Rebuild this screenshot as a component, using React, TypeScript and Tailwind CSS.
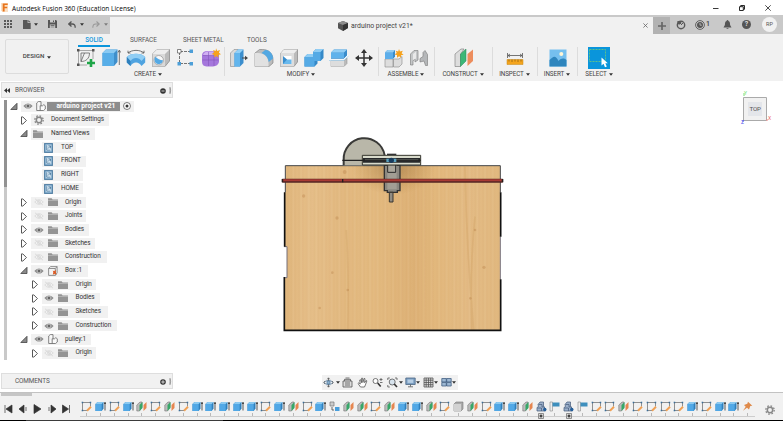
import React from "react";

type P = { className?: string };

const Caret = ({ className = "" }: P) => (
  <svg className={`shrink-0 ${className}`} width="4" height="3" viewBox="0 0 4 3"><path d="M0 .2h4L2 2.8z" fill="#333" /></svg>
);

/* ---------- title and document bar ---------- */

function TitleBar() {
  return (
    <div className="flex h-[15px] shrink-0 items-center bg-white pr-[12px]">
      <svg width="9" height="11" viewBox="0 0 9 11" className="ml-px">
        <path d="M0 1h7v9H1.5L0 8.5z" fill="#fbe0c4" />
        <path d="M1.7 1.5h5V3H3.6v1.7h2.6v1.5H3.6V9.5H1.7z" fill="#e8741c" />
      </svg>
      <span className="ml-[2px] mt-[2px] w-[126px] whitespace-nowrap font-['Open_Sans'] text-[6.5px] tracking-[0.02px] text-black">Autodesk Fusion 360 (Education License)</span>
      <div className="ml-auto flex items-center gap-[20px]">
        <svg width="6" height="6" viewBox="0 0 6 6"><path d="M0 3.5h5.5" stroke="#222" strokeWidth=".9" /></svg>
        <svg width="6" height="6" viewBox="0 0 6 6" fill="none" stroke="#111" strokeWidth=".9"><path d="M.5 1.7h3.8v3.8H.5z" /><path d="M1.700 1.700V.5h3.800v3.800H4.300" /></svg>
        <svg width="6" height="6" viewBox="0 0 6 6"><path d="M.3.3l5.4 5.4M5.7.3L.3 5.7" stroke="#222" strokeWidth=".8" /></svg>
      </div>
    </div>
  );
}

function DocumentBar() {
  return (
    <div className="flex h-[19px] shrink-0 bg-[#c9c9c9] pt-[2px]">
      <div className="flex w-[110px] shrink-0 items-center pb-[3px] pl-[4px]">
        <svg width="8" height="8" viewBox="0 0 8 8" fill="#595959">
          {[0, 3, 6].map((y) => [0, 3, 6].map((x) => <rect key={`${x}${y}`} x={x} y={y} width="2" height="2" />))}
        </svg>
        <svg className="ml-[11px]" width="8" height="9" viewBox="0 0 8 9"><path d="M0 0h4.600v3H7.700v6H0z" fill="#595959" /><path d="M5.300 0l2.400 2.300H5.300z" fill="#595959" /></svg>
        <Caret className="ml-[3px]" />
        <svg className="ml-[10px]" width="9" height="8" viewBox="0 0 9 8"><path d="M0 0h8l1 1v7H0z" fill="#555" /><path d="M2 0h5v2.500H2zM1.800 4.400h5.400V8H1.800z" fill="#c9c9c9" /><path d="M5 .4h1v1.500H5zM2.600 5.300h3.800v.7H2.600zM2.600 6.700h3.800v.6H2.600z" fill="#555" /></svg>
        <svg className="ml-[11px]" width="8" height="7" viewBox="0 0 8 7"><path d="M3.500.5L.8 3l2.700 2.500M.8 3h3.500q3 0 2.900 3.700" fill="none" stroke="#555" strokeWidth="1.300" /></svg>
        <Caret className="ml-[4px]" />
        <svg className="ml-[8px]" width="8" height="7" viewBox="0 0 8 7"><path d="M4.500.5L7.200 3 4.500 5.500M7.200 3H3.700Q.8 3 .8 6.700" fill="none" stroke="#999" strokeWidth="1.100" /></svg>
        <Caret className="ml-[4px] opacity-50" />
      </div>
      <div className="flex w-[543px] items-center bg-[#f1f1f1] pr-[5px]">
        <svg className="ml-[228px]" width="10" height="10" viewBox="0 0 10 10"><path d="M0 2l5-2 5 2v5L5 10 0 7.300z" fill="#545454" /><path d="M0 2l5-2 5 2-5 1.900z" fill="#8e8e8e" /><path d="M5 3.900L10 2v5l-5 3z" fill="#353535" /></svg>
        <span className="ml-[3px] mt-[1px] whitespace-nowrap font-['Roboto'] text-[6.9px] text-[#444]">arduino project v21*</span>
        <svg className="ml-auto" width="5" height="5" viewBox="0 0 5 5"><path d="M.4.4l4.200 4.200M4.600.4L.4 4.600" stroke="#666" strokeWidth=".8" /></svg>
      </div>
      <div className="flex w-[17px] items-center justify-center bg-[#b2b2b2]">
        <svg width="8" height="8" viewBox="0 0 8 8"><path d="M4 0v8M0 4h8" stroke="#666" strokeWidth="1.700" /></svg>
      </div>
      <div className="flex flex-1 items-center pb-[2px] pl-[6px]">
        <svg width="10" height="10" viewBox="0 0 10 10"><circle cx="5" cy="5" r="3.700" fill="none" stroke="#595959" strokeWidth="1.400" /><path d="M1.400 1h3.800v3H3.800L3 5.300 2.400 4h-1z" fill="#595959" /><path d="M5 5l2-2" stroke="#595959" /></svg>
        <svg className="ml-[9px]" width="10" height="10" viewBox="0 0 10 10"><circle cx="5" cy="5" r="4.400" fill="none" stroke="#555" strokeWidth=".9" /><circle cx="5" cy="5" r="3" fill="#555" /><path d="M5 3v2.200h1.800" fill="none" stroke="#c9c9c9" strokeWidth=".8" /></svg>
        <span className="ml-[1px] w-[5px] font-['Roboto'] text-[7px] font-medium text-[#444]">1</span>
        <svg className="ml-[12px]" width="9" height="10" viewBox="0 0 9 10" fill="#555"><path d="M4.500 0c.6 0 .9.4.9.9C7 1.500 7 3 7.100 5L8.500 7.600H.5L1.900 5C2 3 2 1.500 3.600.9c0-.5.3-.9.9-.9zM3.300 8.300h2.400c0 1-2.400 1-2.400 0z" /></svg>
        <span className="ml-[10px] flex h-[9px] w-[9px] items-center justify-center rounded-full bg-[#555] font-['Roboto'] text-[7px] font-bold leading-none text-[#ddd]">?</span>
        <span className="ml-[11px] flex h-[15px] w-[15px] items-center justify-center rounded-full bg-[#f1f1f1] font-['Roboto'] text-[5.5px] text-[#555]">RP</span>
      </div>
    </div>
  );
}

/* ---------- ribbon icons, all drawn on a 20 unit grid ---------- */

const Ico = ({ children, className = "" }: { children: React.ReactNode; className?: string }) => (
  <svg className={`shrink-0 ${className}`} width="20" height="20" viewBox="0 0 20 20" fill="none">{children}</svg>
);

const icons = {
  sketch: (
    <Ico><path d="M2 2.500h15M2.500 2v15M17 2v9M2 17h9" stroke="#777" strokeWidth=".6" /><path d="M5 5v8.500c5 0 8.500-3 8.500-8.500M5 5h8.500M5 13.500L8.500 5" stroke="#666" strokeWidth=".8" /><path d="M1 1h2.500v2.500H1zM16 1h2.500v2.500H16zM1 15.500h2.500V18H1z" fill="#555" /><path d="M15 11v8M11 15h8" stroke="#1fa548" strokeWidth="2.600" /></Ico>
  ),
  extrude: (
    <Ico><path d="M1.500 5l3.500-3.500h11.500v12.500l-3.500 4H1.500z" fill="#3f8fcb" /><path d="M1.500 5l3.500-3.500h11.500l-3.500 3.500z" fill="#8bcaf2" /><path d="M1.500 5H13v13H1.500z" fill="#58aee8" /><path d="M18.300 17V3M17 4.500L18.300 2l1.400 2.500" stroke="#555" strokeWidth=".8" /></Ico>
  ),
  revolve: (
    <Ico><path d="M.8 9C4 4.500 16 4.500 19.200 9v5.500L15.500 18q-2-3.500-5.500-3.500T4.500 18L.8 14.500z" fill="#4fa3e0" /><path d="M.8 9C4 4.500 16 4.500 19.200 9l-3.700 4q-2-3-5.500-3t-5.500 3z" fill="#91cef4" /><path d="M4.500 13v5L.8 14.500V9z" fill="#2f80bd" /><path d="M2 5C6 1.500 14 1.500 18 5M2 2.700V5h2.500M18 2.700V5h-2.500" stroke="#555" strokeWidth=".8" /></Ico>
  ),
  hole: (
    <Ico><path d="M1.500 6l4.500-4.500h12.500v11.500L14 18.500H1.500z" fill="#bbb" stroke="#777" strokeWidth=".6" /><path d="M1.500 6L6 1.500h12.500L14 6z" fill="#eee" /><path d="M1.500 6H14v12.500H1.500z" fill="#d9d9d9" /><circle cx="7.700" cy="12.200" r="4.700" fill="#f8f8f8" stroke="#888" strokeWidth=".6" /><path d="M4.500 8.800c2.500 2 4 3.500 7.500 3.500-.5 4-5 5-7.500 2.500-1.500-2-1.300-4.500 0-6z" fill="#54a9e4" /></Ico>
  ),
  pattern: (
    <Ico><path d="M4 3.500h12M3.500 4v12M4 15.500h12" stroke="#555" strokeWidth=".8" strokeDasharray="3 1" /><path d="M1.500 1.500H5V5H1.500z" fill="#fff" stroke="#555" strokeWidth=".7" /><path d="M13.500 1.500H17V5h-3.500zM1.500 14H5v3.500H1.500zM13.500 14H17v3.500h-3.500z" fill="#4d9fd8" /></Ico>
  ),
  form: (
    <Ico><path d="M1 7Q1.500 3 6.500 3h7.500q4 0 4 4v7q-1 4-6 4.500H5.500Q1 18 1 14z" fill="#a577dc" /><path d="M2 7q1-3.500 5-3.500h7q3 0 3.500 3L14 8z" fill="#d0b0f2" /><path d="M1.500 12h16M7.500 4v14M13 4v14M2 7.500h15" stroke="#8355ba" strokeWidth=".6" /><path d="M15 .3l1.200 2.600 2.800-.9-1.100 2.700 2.100 1.600-2.700.7.200 2.700-2.100-1.700-2.200 1.600.1-2.700-2.600-.8 2.400-1.500-1-2.600 2.600.9z" fill="#f6a21d" /></Ico>
  ),
  press: (
    <Ico><path d="M1.500 5L5 1.500h4V15l-3.500 3.500h-4z" fill="#d9d9d9" stroke="#888" strokeWidth=".6" /><path d="M5.500 5L9 1.500h5.500V15L11 18.500H5.500z" fill="#3b8ecd" /><path d="M5.500 5H11v13.500H5.500z" fill="#62b5ed" /><path d="M5.500 5L9 1.500h5.500L11 5z" fill="#92d0f7" /><path d="M13 10h4" stroke="#444" /><path d="M16 7.800l3 2.200-3 2.200z" fill="#444" /></Ico>
  ),
  fillet: (
    <Ico><path d="M1 5l4.500-3.500h3c6 0 10.500 4 10.500 10V15L15 18.500H1z" fill="#bcbcbc" stroke="#777" strokeWidth=".6" /><path d="M1 5h3c6 0 10.500 4 10.500 10v3.500H1z" fill="#e1e1e1" /><path d="M7.500 5l4-3.200c4.500 1 7.500 4 7.500 8.700L14.700 14c-.4-4-3-7.500-7.200-9z" fill="#53a8e2" /></Ico>
  ),
  shell: (
    <Ico><path d="M1.500 5.500L5 1.500h13.500V14L15 18.500H1.500z" fill="#bbb" stroke="#777" strokeWidth=".6" /><path d="M1.500 5.500H15v13H1.500z" fill="#ddd" /><path d="M1.500 5.500L5 1.500h13.500l-3.500 4z" fill="#eee" /><path d="M4 8h8.500v8H4z" fill="#fff" /><path d="M4 8l4 3.500v4.500H4z" fill="#3b8ecd" /><path d="M8 11.500h4.500V16H4z" fill="#69b9ed" /></Ico>
  ),
  combine: (
    <Ico><path d="M.5 9l3-3H9V4l3-3h7.500v9l-3 3H13.500v2.500l-3 3H.5z" fill="#3589c8" /><path d="M.5 9H9V4h7.500v9h-6v5.500H.5z" fill="#55aae5" /><path d="M.5 9l3-3H9v3zM9 4l3-3h7.500l-3 3z" fill="#90cdf4" /></Ico>
  ),
  split: (
    <Ico><path d="M2 4.500L5 1.500h13V8l-3 3H2z" fill="#398ccc" /><path d="M2 4.500h13V10H2z" fill="#60b2eb" /><path d="M2 4.500l3-3h13l-3 3z" fill="#93cef4" /><path d="M2 13h13l3-3v5.500L15 18.500H2z" fill="#bbb" stroke="#888" strokeWidth=".5" /><path d="M2 13h13v5.500H2z" fill="#ddd" /><path d="M0 11.500h15L19.500 7" stroke="#fff" strokeWidth="1.300" /><path d="M0 12.300h15L19.500 8" stroke="#5aace0" strokeWidth=".5" /></Ico>
  ),
  move: (
    <Ico><path d="M10 3v14M3 10h14" stroke="#333" strokeWidth="1.500" /><path d="M10 1l3 4H7zM10 19l3-4H7zM1 10l4-3v6zM19 10l-4-3v6z" fill="#333" /></Ico>
  ),
  component: (
    <Ico><path d="M1 11h8v8H1zM9.500 11H15l3-2.500V16l-3 3H9.500z" fill="#ddd" stroke="#888" strokeWidth=".6" /><path d="M1 4.500L3.500 2H11v6.500L9 11H1z" fill="#378bcb" /><path d="M1 4.500h8V11H1z" fill="#5badea" /><path d="M1 4.500L3.500 2H11L9 4.500z" fill="#91ccf3" /><path d="M15 1l1 2.500 2.800-.7-1.200 2.400 2 1.500-2.600.5.200 2.500-2.100-1.500-2.100 1.600v-2.700l-2.600-.5 2.300-1.500-1-2.400 2.500.8z" fill="#f6a21d" /></Ico>
  ),
  joint: (
    <Ico><path d="M1.500 6L5 2.500h4V12l-3 2v-2.500q-2 0-2 2V17H1.500z" fill="#c5c7c8" stroke="#777" strokeWidth=".6" /><path d="M18.500 6.500L16 2.500 14 4.500v4l-3 2V14l4-1 1.500 4.500h2z" fill="#b5b7b9" stroke="#777" strokeWidth=".6" /><path d="M4 6l3-2.500v7L4 12z" fill="#e9e9e9" /></Ico>
  ),
  plane: (
    <Ico><path d="M1 6l6-5h3L6.500 6.500v12H1z" fill="#ddd" stroke="#777" strokeWidth=".6" /><path d="M6.500 6L12 1v12l-5.500 5.500z" fill="#3cb777" stroke="#258b54" strokeWidth=".5" /><path d="M13.500 6L19 1.500V13l-5.500 5z" fill="#ed8d5d" /></Ico>
  ),
  measure: (
    <Ico><path d="M2 11.500h16v5H2z" fill="#f4a51e" stroke="#c58717" strokeWidth=".5" /><path d="M4 11.500v2M7 11.500v2.500M10 11.500v2M13 11.500v2.500M16 11.500v2" stroke="#855910" strokeWidth=".7" /><path d="M2.500 5v5M17.500 5v5M3 7.500h14M5 6L3 7.500 5 9M15 6l2 1.500L15 9" stroke="#555" strokeWidth=".8" /></Ico>
  ),
  image: (
    <Ico><path d="M1.500 1.500h17v17h-17z" fill="#75bfee" /><path d="M1.500 12c4-4 6-5 9 1 3-3 5-3 8-1v6.500h-17z" fill="#2e85bd" /><circle cx="13.300" cy="6" r="2" fill="#fff5d5" /></Ico>
  ),
  select: (
    <svg className="mr-[2px] shrink-0" width="22" height="22" viewBox="0 0 22 22" fill="none"><path d="M0 0h22v22H0z" fill="#0a95db" /><path d="M1.500 2.500h16v12h-16z" stroke="#72cb76" strokeWidth=".8" strokeDasharray="2 1" /><path d="M13.500 10.500v8l2-1.700 1.500 3.400 1.800-.8-1.500-3.200h2.500z" fill="#fff" /></svg>
  ),
};

function Group({ label, items, className }: { label: string; items: React.ReactNode[]; className: string }) {
  return (
    <div className={`flex shrink-0 flex-col items-center ${className}`}>
      <div className="flex h-[22px] items-center justify-center gap-[4.900px]">
        {items.map((it, i) => <React.Fragment key={i}>{it}</React.Fragment>)}
      </div>
      <div className="mt-[1px] flex h-[9px] items-center gap-[2px] whitespace-nowrap pr-[1px] font-['Roboto'] text-[6.3px] tracking-[-0.1px] text-[#444]">
        {label}<Caret />
      </div>
    </div>
  );
}

const Rule = () => <div className="h-[29px] w-px shrink-0 bg-[#dcdcdc]" />;

function Ribbon() {
  return (
    <div className="flex h-[47px] shrink-0 bg-[#f1f1f1]">
      <div className="ml-[5px] mt-[5px] flex h-[35px] w-[64px] items-center justify-center gap-[3px] rounded-[2px] border border-[#dcdcdc] pt-[1px] font-['Roboto'] text-[6.2px] font-medium text-[#444]">
        DESIGN<Caret />
      </div>
      <div className="ml-[4px] flex flex-col">
        <div className="flex h-[13px] font-['Roboto'] text-[6.400px] leading-[12px] text-[#555]">
          <span className="ml-[5px] w-[32px] border-b-2 border-[#0a95db] text-center font-medium text-[#0a95db]">SOLID</span>
          <span className="ml-[20px] w-[53px] whitespace-nowrap">SURFACE</span>
          <span className="w-[64px] whitespace-nowrap tracking-[-0.08px]">SHEET METAL</span>
          <span>TOOLS</span>
        </div>
        <div className="flex">
          <Group className="w-[151px]" label="CREATE" items={[icons.sketch, icons.extrude, icons.revolve, icons.hole, icons.pattern, icons.form]} />
          <Rule />
          <Group className="w-[153px]" label="MODIFY" items={[icons.press, icons.fillet, icons.shell, icons.combine, icons.split, icons.move]} />
          <Rule />
          <Group className="w-[55px]" label="ASSEMBLE" items={[icons.component, icons.joint]} />
          <Rule />
          <Group className="w-[57px]" label="CONSTRUCT" items={[icons.plane]} />
          <Rule />
          <Group className="w-[44px]" label="INSPECT" items={[icons.measure]} />
          <Rule />
          <Group className="w-[39px]" label="INSERT" items={[icons.image]} />
          <Rule />
          <Group className="w-[43px]" label="SELECT" items={[icons.select]} />
        </div>
      </div>
    </div>
  );
}

/* ---------- browser tree ---------- */

const Eye = ({ off }: { off?: boolean }) => (
  <svg width="10" height="8" viewBox="0 0 10 8" className="shrink-0">
    {off ? (
      <g fill="none" stroke="#d5d5d5" strokeWidth=".8"><path d="M.8 4C3 1 7 1 9.200 4 7 7 3 7 .8 4z" /><circle cx="5" cy="4" r="1.400" /><path d="M1 .8l8 6.400" /></g>
    ) : (
      <g><path d="M.4 4C3 .6 7 .6 9.600 4 7 7.400 3 7.400.4 4z" fill="#8c8c8c" /><circle cx="5" cy="4" r="1.900" fill="#666" stroke="#e0e0e0" strokeWidth=".7" /></g>
    )}
  </svg>
);

const Folder = () => (
  <svg width="10" height="8" viewBox="0 0 10 8" className="shrink-0"><path d="M0 .3h3.600l1 1.200H10V8H0z" fill="#949494" /><path d="M0 2.500h10" stroke="#c5c5c5" strokeWidth=".6" /></svg>
);

const Gear = ({ className = "" }: P) => (
  <svg width="10" height="10" viewBox="0 0 10 10" className={`shrink-0 ${className}`}><circle cx="5" cy="5" r="2.700" fill="none" stroke="#888" strokeWidth="1.500" /><circle cx="5" cy="5" r="4.200" fill="none" stroke="#888" strokeWidth="1.300" strokeDasharray="1.650 1.650" /></svg>
);

const ViewIcon = () => (
  <svg width="9" height="10" viewBox="0 0 9 10" className="shrink-0"><path d="M.4.4h8.200v9.200H.4z" fill="#6f9fc3" stroke="#3d6f95" strokeWidth=".8" /><path d="M1.700 1.700h5.600v6.500H1.700z" fill="#d5e6f2" /><path d="M2.700 2.200v5h3.800M4 5.500l2.500-2.500M4.300 2.800h2.200v2.500" fill="none" stroke="#3d6f95" strokeWidth=".7" /></svg>
);

const BoxIcon = () => (
  <svg width="10" height="10" viewBox="0 0 10 10" className="shrink-0"><path d="M.6 2.500L2.500.6h6.600v6.200L7.500 9.400H.6zM.6 2.500h6.700V9M7.300 2.500L9 .7" fill="#f4f4f4" stroke="#777" strokeWidth=".8" /><path d="M4.800 4.500l1.200.8 2-1.300-.3 2 .8 2.500-1.700-.7-2 1 .5-2.200z" fill="#dd5a22" /></svg>
);

const PartIcon = () => (
  <svg width="10" height="10" viewBox="0 0 10 10" className="shrink-0"><path d="M.7 2L2.200.6H5v4.200M.7 2v7.500h6.800L9.300 8V4.800L7.800 3.700 6.500 4.800H4.200v4.700" fill="#fafafa" stroke="#666" strokeWidth=".8" /></svg>
);

const Arrow = ({ open }: { open?: boolean }) => (
  <svg width="8" height="9" viewBox="0 0 8 9" className="shrink-0">
    {open ? <path d="M7 1.300v6.200H.8z" fill="#8a8a8a" stroke="#444" strokeWidth=".8" /> : <path d="M1.500.9h1.300l3.600 3.600-3.600 3.600H1.500z" fill="#fff" stroke="#444" strokeWidth=".9" />}
  </svg>
);

type Item = { t: string; lvl: 0 | 1 | 2; open?: boolean; kind: "root" | "gear" | "views" | "view" | "folder" | "box" | "part"; off?: boolean; w: string };

const tree: Item[] = [
  { t: "arduino project v21", lvl: 0, open: true, kind: "root", w: "w-[113px]" },
  { t: "Document Settings", lvl: 1, kind: "gear", w: "w-[78px]" },
  { t: "Named Views", lvl: 1, open: true, kind: "views", w: "w-[64px]" },
  { t: "TOP", lvl: 2, kind: "view", w: "w-[34px]" },
  { t: "FRONT", lvl: 2, kind: "view", w: "w-[44px]" },
  { t: "RIGHT", lvl: 2, kind: "view", w: "w-[41px]" },
  { t: "HOME", lvl: 2, kind: "view", w: "w-[41px]" },
  { t: "Origin", lvl: 1, kind: "folder", off: true, w: "w-[55px]" },
  { t: "Joints", lvl: 1, kind: "folder", off: true, w: "w-[55px]" },
  { t: "Bodies", lvl: 1, kind: "folder", w: "w-[58px]" },
  { t: "Sketches", lvl: 1, kind: "folder", off: true, w: "w-[64px]" },
  { t: "Construction", lvl: 1, kind: "folder", off: true, w: "w-[76px]" },
  { t: "Box :1", lvl: 1, open: true, kind: "box", w: "w-[57px]" },
  { t: "Origin", lvl: 2, kind: "folder", off: true, w: "w-[54px]" },
  { t: "Bodies", lvl: 2, kind: "folder", w: "w-[58px]" },
  { t: "Sketches", lvl: 2, kind: "folder", off: true, w: "w-[66px]" },
  { t: "Construction", lvl: 2, kind: "folder", w: "w-[75px]" },
  { t: "pulley:1", lvl: 1, open: true, kind: "part", w: "w-[60px]" },
  { t: "Origin", lvl: 2, kind: "folder", off: true, w: "w-[54px]" },
];

const indent = ["pl-[3px]", "pl-[13px]", "pl-[23.500px]"];

function Row({ it }: { it: Item }) {
  return (
    <div className={`flex h-[13.780px] items-center ${indent[it.lvl]}`}>
      {it.kind === "view" ? <span className="w-[8px]" /> : <Arrow open={it.open} />}
      <div className={`ml-[3px] flex h-[11.500px] items-center whitespace-nowrap bg-[#f1f1f1] pl-[1.500px] font-['Roboto'] text-[6.400px] tracking-[-0.08px] text-[#333] ${it.w}`}>
        {it.kind === "root" && (
          <>
            <Eye />
            <span className="ml-[3px]"><PartIcon /></span>
            <span className="ml-[1px] flex h-[9px] w-[73px] items-center justify-end bg-[#8d8d8d] pr-[4px] text-[6.700px] font-bold tracking-[0.05px] text-white">{it.t}</span>
            <svg className="ml-[3px]" width="8" height="8" viewBox="0 0 8 8"><circle cx="4" cy="4" r="3.500" fill="#fff" stroke="#444" strokeWidth=".7" /><circle cx="4" cy="4" r="1.500" fill="#333" /></svg>
          </>
        )}
        {it.kind === "gear" && <><Gear className="ml-[1px]" /><span className="ml-[7.500px]">{it.t}</span></>}
        {it.kind === "views" && <><Folder /><span className="ml-[8.500px]">{it.t}</span></>}
        {it.kind === "view" && <><span className="ml-[0.500px]"><ViewIcon /></span><span className="ml-[8.500px]">{it.t}</span></>}
        {(it.kind === "folder" || it.kind === "box" || it.kind === "part") && (
          <>
            <span className="ml-[1px]"><Eye off={it.off} /></span>
            <span className="ml-[4px]">{it.kind === "folder" ? <Folder /> : it.kind === "box" ? <BoxIcon /> : <PartIcon />}</span>
            <span className="ml-[7.500px]">{it.t}</span>
          </>
        )}
      </div>
    </div>
  );
}

function PanelHead({ title, plus }: { title: string; plus?: boolean }) {
  return (
    <div className="ml-px flex h-[16px] w-[172px] shrink-0 items-center border border-[#dedede] bg-[#f1f1f1] pt-[1px] font-['Roboto'] text-[6.400px] text-[#555]">
      <span className="flex w-[13px] pl-[2px]">{!plus && <svg width="6" height="5" viewBox="0 0 6 5"><path d="M3 0v5L0 2.500zM6 0v5L3 2.500z" fill="#333" /></svg>}</span>
      <span className={plus ? "tracking-[-0.1px]" : ""}>{title}</span>
      <svg className="ml-auto" width="6" height="6" viewBox="0 0 6 6"><circle cx="3" cy="3" r="2.800" fill="#333" /><path d={plus ? "M1.200 3h3.600M3 1.200v3.600" : "M1.500 3h3"} stroke="#f1f1f1" strokeWidth=".8" /></svg>
      <svg className="ml-[3px]" width="3" height="7" viewBox="0 0 3 7"><path d="M1 .3v6.400q1.200-3.200 0-6.400z" stroke="#777" strokeWidth=".6" fill="none" /></svg>
    </div>
  );
}

/* ---------- canvas ---------- */

function Model() {
  return (
    <svg className="absolute left-[275px] top-[49px]" width="240" height="210" viewBox="0 0 720 630">
      <defs>
        <linearGradient id="wood" x1="0" x2="1">
          <stop offset="0" stopColor="#e0b67c" /><stop offset=".12" stopColor="#e5be88" /><stop offset=".27" stopColor="#e2b980" /><stop offset=".42" stopColor="#e3ba80" /><stop offset=".6" stopColor="#ddb176" /><stop offset=".7" stopColor="#e2b87d" /><stop offset=".85" stopColor="#e3bb84" /><stop offset="1" stopColor="#e1b87f" />
        </linearGradient>
        <radialGradient id="shade"><stop offset="0" stopColor="#7a5527" stopOpacity=".42" /><stop offset="1" stopColor="#9b6e2d" stopOpacity="0" /></radialGradient>
        <pattern id="grain" width="23" height="630" patternUnits="userSpaceOnUse"><path d="M3 0v630M15 0v630" stroke="#bd8744" strokeWidth="2" opacity=".1" /><path d="M9 0v630" stroke="#fff0cb" strokeWidth="2" opacity=".14" /></pattern>
        <clipPath id="board"><path d="M32 107H676V600H28V443H36V350H28V187H32z" /></clipPath>
      </defs>
      <g clipPath="url(#board)">
        <path d="M28 107h650v494H28z" fill="url(#wood)" />
        <path d="M28 107h650v494H28z" fill="url(#grain)" />
        <ellipse cx="355" cy="115" rx="125" ry="80" fill="url(#shade)" />
        <path d="M214 300q8 140 4 300M570 110q4 240 26 490M600 260q-16 150-10 340" fill="none" stroke="#ba803c" strokeWidth="5" opacity=".16" />
        <g fill="#a4662c" opacity=".25"><circle cx="86" cy="198" r="5" /><circle cx="186" cy="264" r="5" /><circle cx="209" cy="126" r="6" /><circle cx="627" cy="412" r="5" /><circle cx="218" cy="480" r="4" /><circle cx="172" cy="428" r="4" /><circle cx="600" cy="300" r="4" /><circle cx="134" cy="534" r="4" /><circle cx="586" cy="505" r="4" /></g>
      </g>
      <path d="M31 187V107H676V187" fill="none" stroke="#444" strokeWidth="3" />
      <path d="M28 350h8v93h-8M676 320v128" fill="none" stroke="#77717b" strokeWidth="3" />
      <path d="M29 187v163M28 441v160h649V448M677 187v133" fill="none" stroke="#111" strokeWidth="5" />
      <path d="M206 106V88a62 62 0 0 1 123-12v30z" fill="#b9b7a9" />
      <path d="M206 106V90a62 62 0 0 1 123-14" fill="none" stroke="#3a3a38" strokeWidth="6" />
      <path d="M328 106h47v76h-8v5h-30v-5h-9z" fill="#8b8880" stroke="#333" strokeWidth="4" />
      <path d="M337 106h28v72h-28z" fill="#a29e94" /><path d="M338 104h24v23h-24z" fill="#aaa69b" stroke="#292929" strokeWidth="3" />
      <path d="M343 187h11v29h-11z" fill="#918c82" stroke="#39352e" strokeWidth="3" />
      <path d="M262 76h175v29H262z" fill="#d8dacb" stroke="#35352d" strokeWidth="3" />
      <path d="M264 84h171v14H264z" fill="#26282a" /><path d="M202 91h235" stroke="#222" strokeWidth="4" /><path d="M270 89h160" stroke="#85867e" strokeWidth="1.500" />
      <path d="M336 73h28" stroke="#333" strokeWidth="4" />
      <path d="M334 86h30v10h-30z" fill="#5aa2be" /><circle cx="349" cy="91" r="8" fill="#173b5d" />
      <path d="M22 152h661" stroke="#542623" strokeWidth="12" /><path d="M25 151h655" stroke="#a83a34" strokeWidth="6" />
      <path d="M22 147v10M683 147v10M203 147v10" stroke="#291d1c" strokeWidth="4" />
    </svg>
  );
}

function ViewCube() {
  return (
    <div className="absolute left-[740px] top-[9px] h-[38px] w-[36px]">
      <svg className="absolute left-0 top-0" width="36" height="38" viewBox="0 0 36 38" fill="none">
        <path d="M3.500 7.500h23v23h-23z" fill="#f1f1f1" stroke="#aaa" /><path d="M8 12h14v14H8z" fill="#e4e6ea" />
        <path d="M4 6V3" stroke="#77df77" /><path d="M26 30h2" stroke="#ed8585" /><path d="M3 30v2" stroke="#6262ec" />
      </svg>
      <span className="absolute left-[9.500px] top-[14px] font-['Roboto'] text-[6.200px] leading-[10px] tracking-[-0.2px] text-[#555]">TOP</span>
      <span className="absolute left-[4px] top-[1px] font-['Roboto'] text-[5px] leading-[5px] text-[#68df68]">Y</span>
      <span className="absolute left-[28px] top-[25px] font-['Roboto'] text-[5px] leading-[6px] text-[#ed6565]">X</span>
      <span className="absolute left-px top-[29px] font-['Roboto'] text-[5px] leading-[6px] text-[#5555ee]">Z</span>
    </div>
  );
}

const NavIcon = ({ children, className = "" }: { children: React.ReactNode; className?: string }) => (
  <svg className={`shrink-0 ${className}`} width="11" height="11" viewBox="0 0 11 11" fill="none" stroke="#555" strokeWidth=".8">{children}</svg>
);

function NavBar() {
  return (
    <div className="absolute left-[322px] top-[294px] flex h-[15px] w-[136px] items-center bg-[#f1f1f1] pl-[1px]">
      <NavIcon><ellipse cx="5.500" cy="5.500" rx="4" ry="2" stroke="#5b82a2" /><path d="M5.500 1v9M4.300 2.300L5.500.8l1.200 1.500M4.300 8.700l1.200 1.500 1.200-1.500M2 4L.8 5.500 2 7M9 4l1.200 1.500L9 7" /><path d="M4 4h3v3H4z" fill="#8fb4d0" stroke="#5b82a2" /></NavIcon>
      <Caret className="ml-[1.500px]" />
      <NavIcon className="ml-[2px]"><path d="M1 4h9v6H1zM3 6h5M3 8h5M2.500 4V2.300h6V4M3.500 1h4" fill="#ddd" /></NavIcon>
      <NavIcon className="ml-[4px]"><path d="M3.500 10L1 6.500l.8-.7 1.500 1.200-.6-4 .9-.3 1 3V1.200h1l.3 4.300L7 1.500l1 .2-.4 4L9 3.500l.9.400-1.500 4L7.500 10z" fill="#fff" /></NavIcon>
      <NavIcon className="ml-[4px]"><circle cx="3.500" cy="4" r="2.500" fill="#fff" /><path d="M5.700 6l3 3.500" stroke="#333" strokeWidth="1.600" /><path d="M7.500 2.500h3M9 1v3M8 5.500h2.500" /></NavIcon>
      <NavIcon className="ml-[4px]"><path d="M.8 3V1h2M8 1h2v2M.8 8v2h2" /><circle cx="5.200" cy="5" r="3" fill="#d7e3ed" /><path d="M7.200 7l2.800 3" stroke="#333" strokeWidth="1.700" /></NavIcon>
      <Caret className="ml-[1.500px]" />
      <NavIcon className="ml-[2.200px]"><path d="M.8 1h9.400v6.500H.8z" fill="#7b9ec1" stroke="#4e6885" /><path d="M2.500 2.500h5.800v3.400H2.500z" fill="#b7cee4" stroke="none" /><path d="M5.500 7.500v2M3 9.800h5" /></NavIcon>
      <Caret />
      <NavIcon className="ml-[2.500px]"><path d="M1 1h9v9H1zM1 3.200h9M1 5.500h9M1 7.700h9M3.200 1v9M5.500 1v9M7.700 1v9" fill="#ddd" /></NavIcon>
      <Caret className="ml-[0.500px]" />
      <NavIcon className="ml-[2.500px]"><path d="M.8 1.500h4.500V5H.8zM5.700 1.500h4.500V5H5.700zM.8 5.400h4.500V9H.8zM5.700 5.400h4.500V9H5.700z" fill="#9db8d3" stroke="#446184" /></NavIcon>
      <Caret />
    </div>
  );
}

function Workspace() {
  return (
    <div className="relative flex h-[311px] shrink-0 bg-white">
      <div className="flex w-[174px] flex-col pt-px">
        <PanelHead title="BROWSER" />
        <div className="flex h-[262px] pl-[4px] pt-[1px]">
          <div className="mt-[1px] w-[3px] bg-[#c9c9c9]"><div className="h-[87px] bg-[#929292]" /></div>
          <div className="flex flex-1 flex-col pt-[0.600px]">{tree.map((it, i) => <Row key={i} it={it} />)}</div>
        </div>
        <div className="mt-[13px] flex"><PanelHead title="COMMENTS" plus /></div>
      </div>
      <Model />
      <ViewCube />
      <NavBar />
    </div>
  );
}

/* ---------- timeline ---------- */

const sequence = "sesepspseeeeesepsejppspeepsbpseepafafsspssssesee" + "k";

const feature: Record<string, React.ReactNode> = {
  s: <><path d="M1.500 1.500h8M1.500 1.500v8h5M9.500 1.500v4" stroke="#666" strokeWidth=".7" /><path d="M.7.700h1.500v1.500H.7zM8.700.700h1.500v1.500H8.700zM.7 8.700h1.500v1.500H.7z" fill="#3a6d98" /><path d="M6 9.700l4-4" stroke="#f0a054" strokeWidth="2" /></>,
  e: <><path d="M.5 3l2-2h6v6.500L6.700 10H.5z" fill="#2f80bd" /><path d="M.5 3h6.200v7H.5z" fill="#51a8e6" /><path d="M.5 3l2-2h6L6.700 3z" fill="#8bc9f0" /><path d="M10 9.500v-8M9.300 3l.7-1.700.7 1.700" stroke="#333" strokeWidth=".8" /></>,
  p: <><path d="M.8 4L4 1h2v5L3.500 10H.8z" fill="#bbb" stroke="#777" strokeWidth=".6" /><path d="M3.500 4L6.500 1v6l-3 3z" fill="#37a768" /><path d="M7.500 4L10.500 1v6l-3 3z" fill="#e68650" /></>,
  j: <><path d="M1 1h4v4H1z" fill="#ccc" stroke="#777" strokeWidth=".7" /><path d="M3 6v3h2" stroke="#444" strokeWidth=".8" /><path d="M6 6h4.500v4H6z" fill="#499fdc" /></>,
  b: <><path d="M1 3l2-2h7v7l-2 2H1z" fill="#aaa" stroke="#777" strokeWidth=".6" /><path d="M1 3h7v7H1z" fill="#d2d2d2" /></>,
  a: <><path d="M2 3.500L4 1h3.500v4.500l2 2v2.500H1V6.500l1.500-1z" fill="#9db1cb" stroke="#43597a" strokeWidth=".7" /><path d="M2.500 3.500h3.500v2.500H9M1.500 7h4v3" stroke="#43597a" strokeWidth=".7" /><circle cx="8.800" cy="8.500" r="1.700" fill="#245e9a" /></>,
  f: <><path d="M1 1h2.500v9H1z" fill="#eee" stroke="#888" strokeWidth=".6" /><path d="M3.500 1.500h7v4h-7z" fill="#3e8fbd" /></>,
  k: <><path d="M6 .7l4.300 4-2 .4-1.300 3.400-2-1.700L1 9.700l2.700-4L2 4l3.300-1.200z" fill="#df8a4a" /></>,
};

const play = [
  <path key="a" d="M2 1v8M9 1v8L3 5z" />,
  <path key="b" d="M6 1v8L1 5zM8 3v4" />,
  <path key="c" d="M2 .5l7 4.500-7 4.500z" />,
  <path key="d" d="M4 1v8l5-4zM2 3v4" />,
  <path key="e" d="M8.500 1v8M1.500 1v8l6-4z" />,
];

function Timeline() {
  return (
    <div className="flex h-[28px] shrink-0 flex-col border-t border-[#c2c2c2] bg-[#f1f1f1]">
      <div className="ml-px h-[3px] w-[31px] bg-[#c6c6c6]" />
      <div className="flex h-[24px] items-start">
        <div className="flex w-[80px] shrink-0 gap-[4.500px] pl-[3px] pt-[8px]">
          {play.map((p, i) => <svg key={i} className="shrink-0" width="10" height="10" viewBox="0 0 10 10" fill="#333" stroke="#333" strokeWidth=".7">{p}</svg>)}
        </div>
        <div className="flex shrink-0 pt-[5px]">
          {sequence.split("").map((k, i) => (
            <div key={i} className="relative flex w-[13.780px] shrink-0 flex-col items-center">
              <svg width="11" height="11" viewBox="0 0 11 11" fill="none">{feature[k]}</svg>
              <div className="mt-[1px] h-[3px] w-px bg-[#b9b9b9]" />
              <div className="h-px w-full bg-[#cdcdcd]" />
              {k === "a" && <svg className="absolute left-[4px] top-[12px]" width="6" height="6" viewBox="0 0 6 6"><path d="M.5.5h5v5h-5z" fill="#ddd" stroke="#777" strokeWidth=".8" /><path d="M1.500 3h3M3 1.500v3" stroke="#111" /></svg>}
            </div>
          ))}
        </div>
        <Gear className="ml-auto mr-[8px] mt-[9px]" />
      </div>
    </div>
  );
}

export default function App() {
  return (
    <div className="flex h-[421px] w-[783px] flex-col overflow-hidden bg-white">
      <TitleBar />
      <DocumentBar />
      <Ribbon />
      <Workspace />
      <Timeline />
      <div className="flex h-px shrink-0 bg-black"><div className="ml-[26px] w-[197px] bg-[#3b3b3b]" /></div>
    </div>
  );
}
